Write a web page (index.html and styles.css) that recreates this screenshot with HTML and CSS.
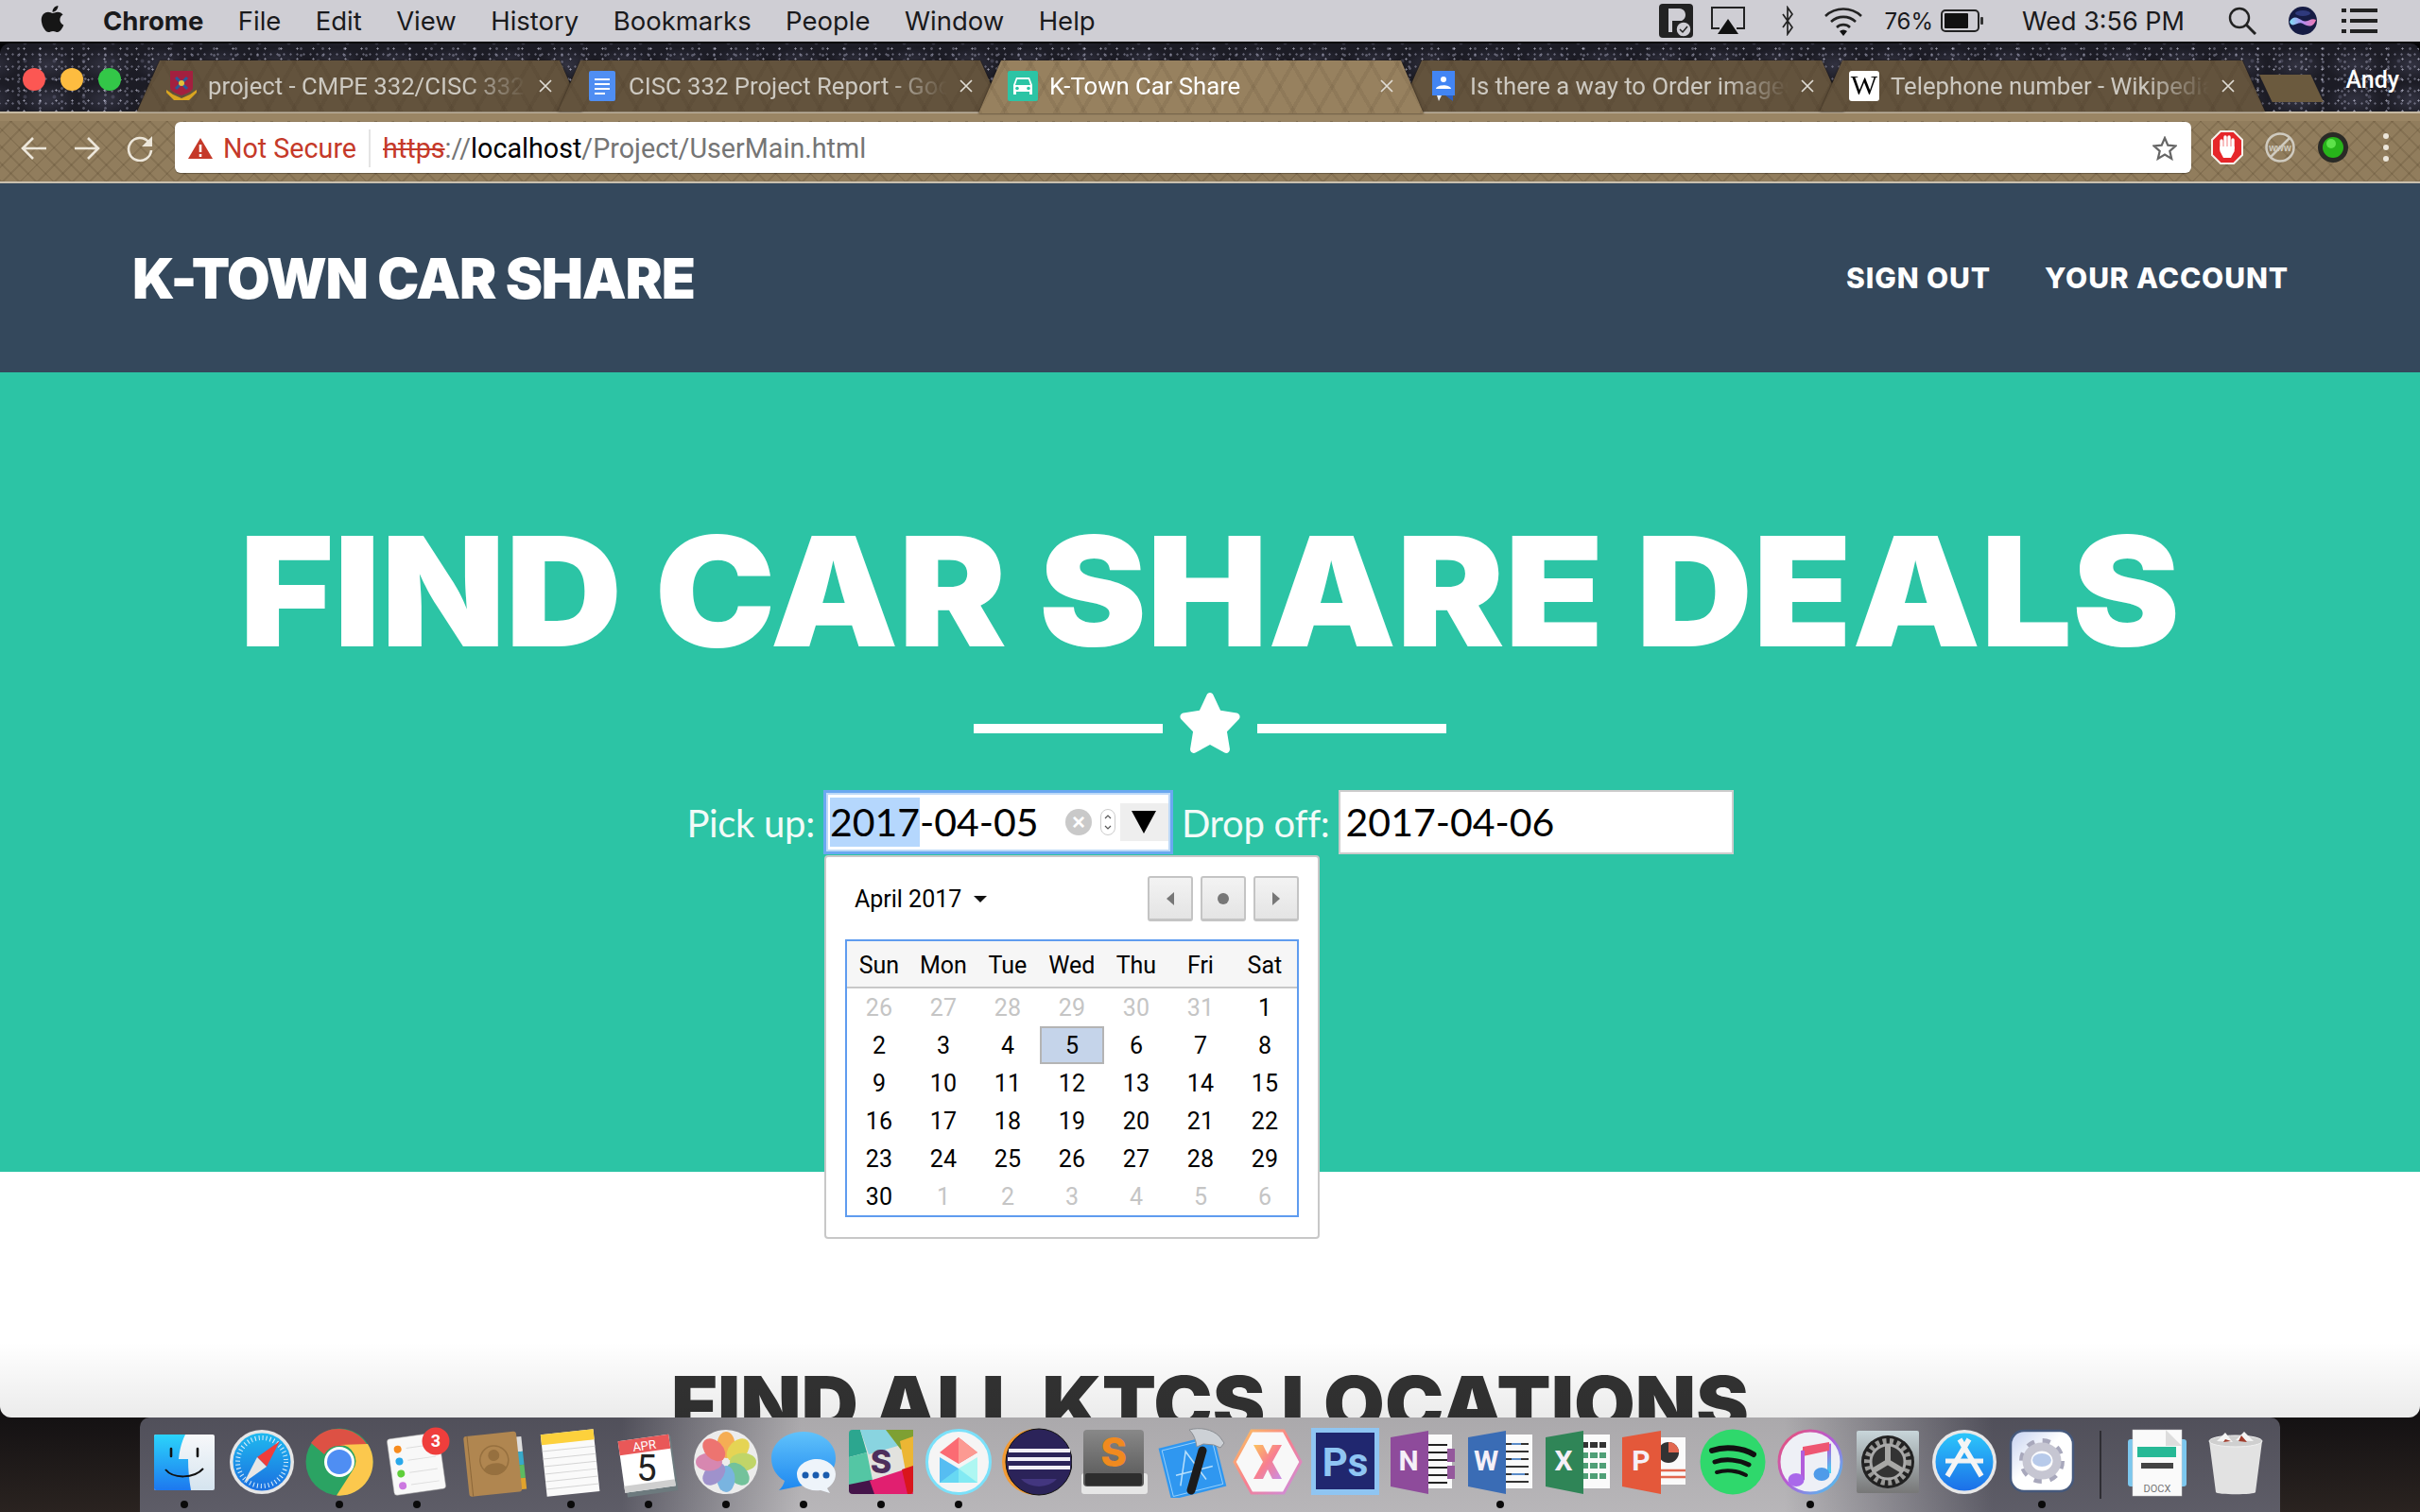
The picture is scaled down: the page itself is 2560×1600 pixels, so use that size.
FILE: index.html
```html
<!DOCTYPE html>
<html lang="en">
<head>
<meta charset="utf-8">
<title>K-Town Car Share</title>
<link rel="stylesheet" href="styles.css">
</head>
<body>
<svg class="defs" width="0" height="0"><defs>
<symbol id="close" viewBox="0 0 16 16"><path d="M2 2L14 14M14 2L2 14" fill="none" stroke="currentColor" stroke-width="1.7"/></symbol>
</defs></svg>
<header class="menubar">
  <svg class="apple" viewBox="0 0 384 512"><path d="M318.7 268.7c-.2-36.7 16.4-64.4 50-84.8-18.8-26.9-47.2-41.7-84.7-44.6-35.5-2.8-74.3 20.7-88.5 20.7-15 0-49.4-19.7-76.4-19.7C63.3 141.2 4 184.8 4 273.5q0 39.3 14.4 81.2c12.8 36.7 59 126.7 107.2 125.2 25.2-.6 43-17.9 75.8-17.9 31.8 0 48.3 17.9 76.4 17.9 48.6-.7 90.4-82.5 102.6-119.3-65.2-30.7-61.7-90-61.7-91.9zm-56.6-164.2c27.3-32.4 24.8-61.9 24-72.5-24.1 1.4-52 16.4-67.9 34.9-17.5 19.8-27.8 44.3-25.6 71.9 26.1 2 49.9-11.4 69.5-34.3z"/></svg>
  <nav class="menus"><b>Chrome</b><span>File</span><span>Edit</span><span>View</span><span>History</span><span>Bookmarks</span><span>People</span><span>Window</span><span>Help</span></nav>
  <div class="status">
    <svg class="st-b" viewBox="0 0 36 36"><rect width="36" height="36" rx="4" fill="#222"/><path d="M10 5h10c6 0 8 3 8 7 0 3-2 5-4 6H14v12h-4z" fill="#cfced4"/><circle cx="26" cy="27" r="8" fill="#cfced4" stroke="#222" stroke-width="1.5"/><path d="M22 27l3 3 5-6" fill="none" stroke="#222" stroke-width="1.5"/></svg>
    <svg class="st-air" viewBox="0 0 36 30"><path d="M9 23H1V1h34v22h-8" fill="none" stroke="#222" stroke-width="2"/><path d="M18 13l11 16H7z" fill="#111"/></svg>
    <svg class="st-bt" viewBox="0 0 12 32"><path d="M1 9l10 14-5 7V2l5 7L1 23" fill="none" stroke="#222" stroke-width="1.7"/></svg>
    <svg class="st-wifi" viewBox="0 0 42 32"><path d="M2 11a28 28 0 0 1 38 0M8 17a19 19 0 0 1 26 0M14 23a10 10 0 0 1 14 0" fill="none" stroke="#222" stroke-width="2.6"/><path d="M21 32l-4-5a6 6 0 0 1 8 0z" fill="#111"/></svg>
    <span class="st-pct">76%</span>
    <svg class="st-bat" viewBox="0 0 46 24"><rect x="1" y="1" width="39" height="22" rx="4" fill="none" stroke="#222" stroke-width="2"/><rect x="4" y="4" width="25" height="16" rx="1" fill="#111"/><rect x="42" y="8" width="3" height="8" rx="1" fill="#333"/></svg>
    <span class="st-time">Wed 3:56 PM</span>
    <svg class="st-search" viewBox="0 0 30 30"><circle cx="12" cy="12" r="10" fill="none" stroke="#222" stroke-width="2.4"/><path d="M19 19l10 10" stroke="#222" stroke-width="3"/></svg>
    <svg class="st-siri" viewBox="0 0 30 30"><defs><linearGradient id="siri" x1="0" y1="0" x2="1" y2="0"><stop offset="0" stop-color="#7fe0f4"/><stop offset=".5" stop-color="#b38cf0"/><stop offset="1" stop-color="#f07ab0"/></linearGradient></defs><circle cx="15" cy="15" r="15" fill="#161c44"/><path d="M1 16c5-8 9-3 14-1s9-4 14-1c-3 9-9 7-14 4s-11 6-14-2z" fill="url(#siri)"/><ellipse cx="15" cy="7" rx="8" ry="3" fill="#2f3a7c"/></svg>
    <svg class="st-list" viewBox="0 0 38 28"><path d="M9 3h29M9 14h29M9 25h29" stroke="#222" stroke-width="4"/><path d="M0 3h5M0 14h5M0 25h5" stroke="#222" stroke-width="4"/></svg>
  </div>
</header>

<main class="window">
  <div class="tabstrip">
    <div class="lights"><i class="l-red"></i><i class="l-yel"></i><i class="l-grn"></i></div>
    <div class="tabs">
      <div class="tab">
        <svg class="fav" viewBox="0 0 32 32"><path d="M4 0h24v17c0 4-4 6-12 9C8 23 4 21 4 17z" fill="#a3203f"/><path d="M0 20l7 5 9 4 9-4 7-5v3l-8 8H8l-8-8z" fill="#d9a520"/><path d="M10 7l12 12M22 7L10 19" stroke="#2a5a9a" stroke-width="3"/><circle cx="16" cy="13" r="3" fill="#e3c23a"/></svg>
        <span class="tab-title">project - CMPE 332/CISC 332</span>
        <svg class="tab-x"><use href="#close"/></svg>
      </div>
      <div class="tab">
        <svg class="fav fav-doc" viewBox="0 0 32 32"><rect x="2" width="28" height="32" rx="2" fill="#4f8ef3"/><path d="M8 9h16M8 14h16M8 19h16M8 24h11" stroke="#fff" stroke-width="2.2"/></svg>
        <span class="tab-title">CISC 332 Project Report - Google</span>
        <svg class="tab-x"><use href="#close"/></svg>
      </div>
      <div class="tab tab-active">
        <svg class="fav" viewBox="0 0 32 32"><rect width="32" height="32" rx="2" fill="#2cc4a5"/><path d="M9 7h14l3 8v10h-3v-3H9v3H6V15z" fill="#fff"/><path d="M10 9h12l2 6H8z" fill="#2cc4a5"/><circle cx="10" cy="18.500" r="1.800" fill="#2cc4a5"/><circle cx="22" cy="18.500" r="1.800" fill="#2cc4a5"/></svg>
        <span class="tab-title">K-Town Car Share</span>
        <svg class="tab-x"><use href="#close"/></svg>
      </div>
      <div class="tab">
        <svg class="fav" viewBox="0 0 32 32"><path d="M4 0h24v26H14l-3 6-2-6H4z" fill="#e9eef6"/><path d="M4 0h24v26H16l-7 0H4z" fill="#4285f4"/><path d="M26 26l-8 0 8 6z" fill="#2a5fc4"/><circle cx="16" cy="9" r="3" fill="#fff"/><path d="M8 19c1-5 15-5 16 0z" fill="#fff"/></svg>
        <span class="tab-title">Is there a way to Order images</span>
        <svg class="tab-x"><use href="#close"/></svg>
      </div>
      <div class="tab">
        <svg class="fav" viewBox="0 0 32 32"><rect width="32" height="32" rx="3" fill="#fff"/><text x="16" y="25" class="fav-w">W</text></svg>
        <span class="tab-title">Telephone number - Wikipedia</span>
        <svg class="tab-x"><use href="#close"/></svg>
      </div>
      <div class="newtab"></div>
    </div>
    <span class="profile">Andy</span>
  </div>

  <div class="toolbar">
    <svg class="navbtn" viewBox="0 0 28 28"><path d="M27 14H3M13 3L2 14l11 11" fill="none" stroke="#ece6da" stroke-width="2.600"/></svg>
    <svg class="navbtn" viewBox="0 0 28 28"><path d="M1 14h24M15 3l11 11-11 11" fill="none" stroke="#ece6da" stroke-width="2.600"/></svg>
    <svg class="navbtn" viewBox="0 0 28 28"><path d="M23 7a12 12 0 1 0 3 9" fill="none" stroke="#ece6da" stroke-width="2.600"/><path d="M27 1v11H16z" fill="#ece6da"/></svg>
    <div class="omnibox">
      <svg class="warn" viewBox="0 0 26 22"><path d="M13 0l13 22H0z" fill="#c53929"/><path d="M13 7v8M13 17v3" stroke="#fff" stroke-width="2.600"/></svg>
      <span class="notsecure">Not Secure</span>
      <i class="omni-sep"></i>
      <span class="url"><s>https</s><span class="url-g">://</span><span class="url-h">localhost</span><span class="url-g">/Project/UserMain.html</span></span>
      <svg class="bookmark" viewBox="0 0 26 26"><path d="M13 2l3.300 7.600 8.200.8-6.200 5.400 1.900 8.100-7.200-4.300-7.200 4.300 1.900-8.100-6.200-5.400 8.200-.8z" fill="none" stroke="#666" stroke-width="2.200"/></svg>
    </div>
    <div class="exts">
      <svg viewBox="0 0 34 36"><path d="M10 1h14l9 9v16l-9 9H10l-9-9V10z" fill="#e6262a" stroke="#f5f0ea" stroke-width="2"/><path d="M11 20V11M15 18V7M19 18V7M23 19V10" stroke="#fff" stroke-width="3.400" stroke-linecap="round"/><path d="M9.400 17h15.300v5l-3.700 7h-8l-3.600-7z" fill="#fff"/></svg>
      <svg viewBox="0 0 34 36"><circle cx="17" cy="18" r="14.500" fill="none" stroke="#cfcabf" stroke-width="2.500"/><path d="M7 28L27 8" stroke="#cfcabf" stroke-width="2.500"/><text x="17" y="22" class="ext-www">www</text></svg>
      <svg viewBox="0 0 34 36"><circle cx="17" cy="18" r="16" fill="#2a2a26"/><circle cx="17" cy="18" r="11" fill="#27b41a"/><circle cx="15" cy="14" r="5" fill="#5de24a"/></svg>
      <svg viewBox="0 0 34 36"><circle cx="17" cy="6" r="3" fill="#ece6da"/><circle cx="17" cy="18" r="3" fill="#ece6da"/><circle cx="17" cy="30" r="3" fill="#ece6da"/></svg>
    </div>
  </div>

  <div class="page">
    <div class="site-head">
      <a class="brand">K-TOWN CAR SHARE</a>
      <nav class="site-nav"><a>SIGN OUT</a><a>YOUR ACCOUNT</a></nav>
    </div>
    <section class="hero">
      <h1>FIND CAR SHARE DEALS</h1>
      <div class="divider"><i></i><svg viewBox="0 0 576 512" preserveAspectRatio="none"><path d="M259.3 17.8L194 150.200 47.900 171.500c-26.200 3.800-36.700 36.100-17.700 54.600l105.700 103-25 145.500c-4.500 26.300 23.200 46 46.400 33.700L288 439.600l130.700 68.700c23.200 12.200 50.900-7.400 46.400-33.700l-25-145.500 105.700-103c19-18.500 8.500-50.800-17.700-54.600L382 150.200 316.700 17.800c-11.700-23.600-45.600-24.200-57.400 0z" fill="#fff"/></svg><i></i></div>
      <form class="dates">
        <label>Pick up:</label>
        <div class="field field-focus">
          <span class="val"><span class="sel">2017</span>-04-05</span>
          <span class="clear">×</span>
          <svg class="spin" viewBox="0 0 16 28"><rect x=".5" y=".5" width="15" height="27" rx="7.500" fill="#fff" stroke="#ccc"/><path d="M5 10l3-3 3 3M5 18l3 3 3-3" fill="none" stroke="#555" stroke-width="1.200"/></svg>
          <span class="drop"><i></i></span>
          <div class="picker">
            <div class="picker-top">
              <span class="month">April 2017</span><i class="caret"></i>
              <div class="pbtns">
                <span class="pbtn"><i class="tri-l"></i></span>
                <span class="pbtn"><i class="pdot"></i></span>
                <span class="pbtn"><i class="tri-r"></i></span>
              </div>
            </div>
            <div class="cal">
              <div class="cal-head"><span>Sun</span><span>Mon</span><span>Tue</span><span>Wed</span><span>Thu</span><span>Fri</span><span>Sat</span></div>
              <div class="cal-body">
                <span class="off">26</span><span class="off">27</span><span class="off">28</span><span class="off">29</span><span class="off">30</span><span class="off">31</span><span>1</span>
                <span>2</span><span>3</span><span>4</span><span class="today">5</span><span>6</span><span>7</span><span>8</span>
                <span>9</span><span>10</span><span>11</span><span>12</span><span>13</span><span>14</span><span>15</span>
                <span>16</span><span>17</span><span>18</span><span>19</span><span>20</span><span>21</span><span>22</span>
                <span>23</span><span>24</span><span>25</span><span>26</span><span>27</span><span>28</span><span>29</span>
                <span>30</span><span class="off">1</span><span class="off">2</span><span class="off">3</span><span class="off">4</span><span class="off">5</span><span class="off">6</span>
              </div>
            </div>
          </div>
        </div>
        <label>Drop off:</label>
        <div class="field field-plain"><span class="val">2017-04-06</span></div>
      </form>
    </section>
    <section class="locations"><h2>FIND ALL KTCS LOCATIONS</h2></section>
    <div class="dock-shade"></div>
  </div>
</main>

<footer class="dock">
  <div class="dk dot"><svg viewBox="0 0 76 76"><defs><linearGradient id="f1" x1="0" y1="0" x2="0" y2="1"><stop offset="0" stop-color="#2bd4fb"/><stop offset="1" stop-color="#1d78ef"/></linearGradient><linearGradient id="f2" x1="0" y1="0" x2="0" y2="1"><stop offset="0" stop-color="#f7f8fa"/><stop offset="1" stop-color="#d5e4ef"/></linearGradient></defs><rect x="6" y="9" width="64" height="59" rx="2" fill="url(#f2)"/><path d="M8 9h31c-4 8-6 16-7 26h10c0 11 1 22 3 33H8a2 2 0 0 1-2-2V11a2 2 0 0 1 2-2z" fill="url(#f1)"/><path d="M24 24v8M52 24v8" stroke="#111" stroke-width="2.600" stroke-linecap="round"/><path d="M18 46c8 10 30 10 40-1" fill="none" stroke="#111" stroke-width="2"/></svg></div>
  <div class="dk"><svg viewBox="0 0 76 76"><defs><linearGradient id="s1" x1="0" y1="0" x2="0" y2="1"><stop offset="0" stop-color="#1fb9ef"/><stop offset="1" stop-color="#1b6fe0"/></linearGradient></defs><circle cx="38" cy="38" r="34" fill="#e6e6e6"/><circle cx="38" cy="38" r="30.500" fill="url(#s1)"/><circle cx="38" cy="38" r="25.500" fill="none" stroke="#dff1fb" stroke-width="5" stroke-dasharray="1 3"/><path d="M57 16L43 43 33 33z" fill="#ee3d3b"/><path d="M19 60l14-27 10 10z" fill="#e6e6e6"/></svg></div>
  <div class="dk dot"><svg viewBox="0 0 76 76"><circle cx="38" cy="38" r="35.500" fill="#2ba363"/><path d="M8 18a35.500 35.500 0 0 1 60 3H38a18 18 0 0 0-16 9z" fill="#dd5144"/><path d="M68 19a35.500 35.500 0 0 1-33 54.500L52 47a17 17 0 0 0-14-27z" fill="#fcc84d"/><circle cx="38" cy="38" r="16" fill="#fff"/><circle cx="38" cy="38" r="13" fill="#4f8ef3"/></svg></div>
  <div class="dk dot"><svg viewBox="0 0 76 76"><g transform="rotate(-8 38 40)"><rect x="10" y="10" width="55" height="60" rx="3" fill="#f8f8f8" stroke="#aaa" stroke-width=".5"/><circle cx="20" cy="22" r="4" fill="#f78b1e"/><circle cx="20" cy="35" r="4" fill="#29a8ea"/><circle cx="20" cy="48" r="4" fill="#5fcf3a"/><circle cx="20" cy="61" r="4" fill="#cc78e0"/><path d="M29 22h30M29 35h30M29 48h30M29 61h30" stroke="#ddd"/></g><circle cx="58" cy="16" r="14.500" fill="#ef3e3c"/><text x="58" y="22" class="dk-badge">3</text></svg></div>
  <div class="dk"><svg viewBox="0 0 76 76"><g transform="rotate(-6 38 38)"><rect x="60" y="14" width="9" height="16" fill="#ddd"/><rect x="60" y="30" width="9" height="14" fill="#38a9c9"/><rect x="60" y="44" width="9" height="14" fill="#5cbb62"/><rect x="60" y="58" width="9" height="12" fill="#e2a32c"/><rect x="8" y="8" width="56" height="64" rx="3" fill="#b08650"/><path d="M12 8v64" stroke="#8b6739"/><circle cx="38" cy="36" r="15" fill="none" stroke="#96703f" stroke-width="1.500"/><circle cx="38" cy="31" r="6" fill="#96703f"/><path d="M26 46c2-9 22-9 24 0a15 15 0 0 1-24 0z" fill="#96703f"/></g></svg></div>
  <div class="dk dot"><svg viewBox="0 0 76 76"><g transform="rotate(-6 38 38)"><rect x="9" y="6" width="56" height="66" fill="#fafafa"/><path d="M9 16h56M9 24h56M9 32h56M9 40h56M9 48h56M9 56h56M9 64h56" stroke="#d4d4d4"/><rect x="9" y="6" width="56" height="11" fill="#fdd13c"/></g></svg></div>
  <div class="dk dot"><svg viewBox="0 0 76 76"><g transform="rotate(-8 38 38)"><rect x="11" y="14" width="54" height="58" fill="#6d7a7e"/><rect x="9" y="12" width="54" height="55" fill="#fff"/><rect x="9" y="12" width="54" height="15" fill="#e95858"/><rect x="9" y="60" width="54" height="7" fill="#cfcfcf"/><text x="36" y="25" class="dk-apr">APR</text></g><text x="36" y="58" class="dk-five">5</text></svg></div>
  <div class="dk dot"><svg viewBox="0 0 76 76"><circle cx="38" cy="38" r="34" fill="#ececec"/><g opacity=".82"><ellipse cx="38" cy="20" rx="9.500" ry="14" fill="#f7a033"/><ellipse cx="38" cy="20" rx="9.500" ry="14" fill="#e4cf33" transform="rotate(45 38 38)"/><ellipse cx="38" cy="20" rx="9.500" ry="14" fill="#b7d14c" transform="rotate(90 38 38)"/><ellipse cx="38" cy="20" rx="9.500" ry="14" fill="#59b98a" transform="rotate(135 38 38)"/><ellipse cx="38" cy="20" rx="9.500" ry="14" fill="#61a8de" transform="rotate(180 38 38)"/><ellipse cx="38" cy="20" rx="9.500" ry="14" fill="#8f7fc6" transform="rotate(225 38 38)"/><ellipse cx="38" cy="20" rx="9.500" ry="14" fill="#d372a4" transform="rotate(270 38 38)"/><ellipse cx="38" cy="20" rx="9.500" ry="14" fill="#ee5a55" transform="rotate(315 38 38)"/></g></svg></div>
  <div class="dk dot"><svg viewBox="0 0 76 76"><defs><linearGradient id="m1" x1="0" y1="0" x2="0" y2="1"><stop offset="0" stop-color="#60c2fb"/><stop offset="1" stop-color="#1e88f0"/></linearGradient></defs><path d="M38 6c19 0 34 12 34 28S57 61 42 62L12 68c3-3 5-6 6-10C9 53 4 44 4 34 4 18 19 6 38 6z" fill="url(#m1)"/><path d="M52 35c11 0 20 7 20 16 0 8-6 13-9 15l3 5-10-3c-15 2-25-7-25-17 0-9 10-16 21-16z" fill="#eef4fa"/><circle cx="40" cy="52" r="3.500" fill="#1a5cae"/><circle cx="51" cy="52" r="3.500" fill="#1a5cae"/><circle cx="62" cy="52" r="3.500" fill="#1a5cae"/></svg></div>
  <div class="dk dot"><svg viewBox="0 0 76 76"><rect x="4" y="4" width="68" height="68" rx="6" fill="#e2e2de"/><path d="M4 8a4 4 0 0 1 4-4h8l7 24-19 5z" fill="#2ca68f"/><path d="M16 4h44l6 14-41 12z" fill="#89d4e0"/><path d="M43 4h29v12l-13 9z" fill="#7ea033"/><path d="M58 16l14-5v34l-8 3z" fill="#ecb634"/><path d="M4 33l19-5 7 34-26 8z" fill="#54c6a4"/><path d="M4 62l24-5 5 15H8a4 4 0 0 1-4-4z" fill="#45144a"/><path d="M26 58l40-13 6 27H31z" fill="#e11f70"/><path d="M60 46l12-4v26a4 4 0 0 1-4 4h-2z" fill="#d9161c"/><text x="38" y="50" class="dk-s">S</text></svg></div>
  <div class="dk dot"><svg viewBox="0 0 76 76"><circle cx="38" cy="38" r="33.500" fill="#f5f5f5" stroke="#7be1fa" stroke-width="3"/><path d="M38 12l20 16-20 12-20-12z" fill="#fb6b73"/><path d="M38 12l20 16-20 12z" fill="#fc9a92"/><path d="M18 33l20 12v15H18z" fill="#56bdf2"/><path d="M58 33L38 45v15h20z" fill="#aef7f2"/><path d="M18 60l20-15 20 15z" fill="#6fe4f4" opacity=".7"/></svg></div>
  <div class="dk"><svg viewBox="0 0 76 76"><circle cx="37" cy="38" r="35" fill="#f29a33"/><circle cx="41" cy="38" r="35" fill="#2b2359" stroke="#111" stroke-width="1"/><path d="M22 56a22 16 0 0 0 38 0z" fill="#43367f"/><path d="M9 26h65M8 35h66M9 44h65" stroke="#f1eff7" stroke-width="4"/></svg></div>
  <div class="dk"><svg viewBox="0 0 76 76"><defs><linearGradient id="sb" x1="0" y1="0" x2="0" y2="1"><stop offset="0" stop-color="#888"/><stop offset="1" stop-color="#555"/></linearGradient></defs><rect x="4" y="50" width="70" height="22" rx="3" fill="#e6e6e6"/><rect x="6" y="4" width="64" height="60" rx="4" fill="url(#sb)"/><rect x="8" y="50" width="60" height="13" rx="2" fill="#2d2d2d"/><text x="38" y="43" class="dk-sub">S</text></svg></div>
  <div class="dk"><svg viewBox="0 0 76 76"><g transform="rotate(-14 38 42)"><rect x="9" y="16" width="60" height="56" fill="#2f97f0"/><rect x="12" y="19" width="54" height="50" fill="none" stroke="#a8d8fc" stroke-width=".8"/><path d="M22 60L36 26l14 34M20 48h40" fill="none" stroke="#b9e0fb" stroke-width="1.500"/></g><path d="M50 26L38 68" stroke="#1c1c1c" stroke-width="9" stroke-linecap="round"/><path d="M36 4c11-3 24-1 32 7l5 7-4 5-7-3-11-1-7 3c-1-7-3-13-8-18z" fill="#cdd1d6" stroke="#8a8d92"/></svg></div>
  <div class="dk"><svg viewBox="0 0 76 76"><defs><linearGradient id="x1" x1="0" y1="0" x2="1" y2="1"><stop offset="0" stop-color="#fcc35c"/><stop offset=".5" stop-color="#f87f8f"/><stop offset="1" stop-color="#c88ee6"/></linearGradient></defs><path d="M21 5h34l18 33-18 33H21L3 38z" fill="#f8f8f8" stroke="url(#x1)" stroke-width="3"/><path d="M23 20h10l5 10 5-10h10L43 38l10 18H43l-5-10-5 10H23l10-18z" fill="url(#x1)"/></svg></div>
  <div class="dk"><svg viewBox="0 0 76 76"><rect x="2" y="2" width="72" height="71" fill="#8fc5f2"/><rect x="7" y="7" width="62" height="60" fill="#20276f"/><text x="38" y="53" class="dk-ps">Ps</text></svg></div>
  <div class="dk"><svg viewBox="0 0 76 76"><rect x="36" y="9" width="33" height="57" fill="#fafafa"/><path d="M40 20h24M40 28h24M40 36h24M40 44h24M40 52h24M40 60h24" stroke="#222" stroke-width="2.200"/><rect x="64" y="24" width="8" height="14" fill="#94589c"/><rect x="64" y="42" width="8" height="14" fill="#94589c"/><path d="M4 12l40-7v67L4 64z" fill="#8e4b9b"/><text x="23" y="47" class="dk-off">N</text></svg></div>
  <div class="dk dot"><svg viewBox="0 0 76 76"><rect x="36" y="9" width="36" height="57" fill="#fafafa"/><path d="M40 19h28M40 27h28M40 35h28M40 43h28M40 51h28M40 59h28" stroke="#333" stroke-width="2.200"/><path d="M50 19h10M50 35h10M50 51h14" stroke="#5b8cc9" stroke-width="2.200"/><path d="M4 12l40-7v67L4 64z" fill="#3a6cb5"/><text x="23" y="47" class="dk-off">W</text></svg></div>
  <div class="dk"><svg viewBox="0 0 76 76"><rect x="36" y="9" width="36" height="57" fill="#fafafa"/><path d="M42 20h26M42 31h26M42 42h26M42 53h26" stroke="#4f9f76" stroke-width="6"/><path d="M42 20h26" stroke="#333" stroke-width="6"/><path d="M50 12v50M60 12v50" stroke="#fafafa" stroke-width="2"/><path d="M4 12l40-7v67L4 64z" fill="#2f8557"/><text x="23" y="47" class="dk-off">X</text></svg></div>
  <div class="dk"><svg viewBox="0 0 76 76"><rect x="38" y="12" width="32" height="50" fill="#fafafa"/><circle cx="52" cy="28" r="11" fill="#333"/><path d="M52 17a11 11 0 0 1 11 11H52z" fill="#e2674f"/><path d="M44 47h26M44 54h26" stroke="#e2674f" stroke-width="2.500"/><path d="M3 12l41-7v67L3 64z" fill="#e4583a"/><text x="23" y="47" class="dk-off">P</text></svg></div>
  <div class="dk"><svg viewBox="0 0 76 76"><circle cx="38" cy="38" r="34.500" fill="#2fd86c"/><path d="M16 26c14-5 32-3 44 4" fill="none" stroke="#111" stroke-width="6" stroke-linecap="round"/><path d="M19 38c12-4 26-2 36 3" fill="none" stroke="#111" stroke-width="5" stroke-linecap="round"/><path d="M21 49c10-3 22-2 31 3" fill="none" stroke="#111" stroke-width="4" stroke-linecap="round"/></svg></div>
  <div class="dk dot"><svg viewBox="0 0 76 76"><defs><linearGradient id="it" x1="0" y1="0" x2="1" y2="1"><stop offset="0" stop-color="#f0506a"/><stop offset=".5" stop-color="#b25ddb"/><stop offset="1" stop-color="#3fd3f3"/></linearGradient></defs><circle cx="38" cy="38" r="33" fill="#eef0f6" stroke="url(#it)" stroke-width="3"/><path d="M30 27l28-6v29" fill="none" stroke="url(#it)" stroke-width="4"/><path d="M30 22l28-5v9l-28 6z" fill="#ee5672"/><path d="M30 26v31" stroke="#b25ddb" stroke-width="4"/><ellipse cx="23" cy="57" rx="8.500" ry="7" fill="#a968ea"/><ellipse cx="50" cy="51" rx="8.500" ry="7" fill="#4f9be9"/></svg></div>
  <div class="dk"><svg viewBox="0 0 76 76"><defs><linearGradient id="sp" x1="0" y1="0" x2="0" y2="1"><stop offset="0" stop-color="#c8d6da"/><stop offset="1" stop-color="#777"/></linearGradient></defs><rect x="5" y="5" width="66" height="66" rx="2" fill="url(#sp)"/><circle cx="38" cy="38" r="28" fill="#222"/><circle cx="38" cy="38" r="22" fill="none" stroke="#9a9a98" stroke-width="6" stroke-dasharray="4 3.500"/><circle cx="38" cy="38" r="18" fill="#333" stroke="#aaa" stroke-width="3"/><path d="M38 38V21M38 38L23 47M38 38l15 9" stroke="#a8a8a6" stroke-width="6"/></svg></div>
  <div class="dk"><svg viewBox="0 0 76 76"><defs><linearGradient id="ap" x1="0" y1="0" x2="0" y2="1"><stop offset="0" stop-color="#2cc7fb"/><stop offset="1" stop-color="#1c6fe8"/></linearGradient></defs><circle cx="38" cy="38" r="34" fill="#e8e8e8"/><circle cx="38" cy="38" r="30.500" fill="url(#ap)"/><path d="M18 37h40" stroke="#f2f2f2" stroke-width="5"/><path d="M43 14L20 53M33 14l23 39" stroke="#f5f5f5" stroke-width="5.500"/></svg></div>
  <div class="dk dot"><svg viewBox="0 0 76 76"><defs><linearGradient id="gr" x1="0" y1="0" x2="1" y2="1"><stop offset="0" stop-color="#c4d0f0"/><stop offset=".45" stop-color="#fff"/></linearGradient></defs><rect x="5" y="5" width="66" height="64" rx="14" fill="url(#gr)" stroke="#46597c" stroke-width="2.500"/><circle cx="38" cy="37" r="21" fill="none" stroke="#a8a8bc" stroke-width="6" stroke-dasharray="8 8.500"/><ellipse cx="38" cy="37" rx="16" ry="15" fill="none" stroke="#c6c6d2" stroke-width="9"/><ellipse cx="38" cy="36" rx="10" ry="7" fill="#b7caea"/></svg></div>
  <div class="dk-sep"></div>
  <div class="dk"><svg viewBox="0 0 76 76"><rect x="6" y="14" width="62" height="50" rx="3" fill="#7cc7ee"/><rect x="11" y="4" width="52" height="70" fill="#fafafa" stroke="#ccc" stroke-width=".5"/><path d="M46 4l17 17H46z" fill="#ddd"/><rect x="16" y="22" width="41" height="11" fill="#27b996"/><rect x="20" y="39" width="34" height="6" fill="#444"/><text x="37" y="70" class="dk-docx">DOCX</text></svg></div>
  <div class="dk"><svg viewBox="0 0 76 76"><path d="M10 16h56l-7 54c0 3-42 3-42 0z" fill="#e2e2e2"/><ellipse cx="38" cy="16" rx="28" ry="6" fill="#cfcfcf" stroke="#f0f0f0"/><path d="M18 16l9-9 8 10zM38 15l9-9 10 10z" fill="#f4f4f4"/><path d="M27 14l6 2-8 1zM44 10l6 7-9-1z" fill="#a03c2c"/></svg></div>
</footer>
</body>
</html>
```
FILE: styles.css
```css
* { box-sizing: border-box; }
html, body { margin: 0; height: 100%; }
body {
  position: relative;
  width: 2560px;
  height: 1600px;
  overflow: hidden;
  background: linear-gradient(180deg, #050508 0, #07070b 90%, #2a2320 100%);
  display: flex;
  flex-direction: column;
  font-family: "Inter", "Liberation Sans", sans-serif;
}
.defs { position: absolute; }

/* macOS menu bar */
.menubar {
  height: 46px;
  flex: none;
  background: #cfced4;
  border-bottom: 2px solid #0a0a0a;
  display: flex;
  align-items: center;
  padding: 0 45px 0 42px;
  color: #1a1a1c;
  font-size: 27.5px;
}
.apple { width: 27px; height: 32px; fill: #161616; flex: none; margin-top: -5px; }
.menus { display: flex; gap: 36.4px; margin-left: 40px; white-space: nowrap; }
.menus b { font-weight: 700; }
.status { margin-left: auto; display: flex; align-items: center; white-space: nowrap; }
.status svg { flex: none; }
.st-b { width: 36px; height: 36px; }
.st-air { width: 36px; height: 30px; margin-left: 19px; }
.st-bt { width: 12px; height: 32px; margin-left: 39px; }
.st-wifi { width: 42px; height: 32px; margin-left: 32px; }
.st-pct { margin-left: 22px; font-size: 24px; }
.st-bat { width: 46px; height: 24px; margin-left: 8px; }
.st-time { margin-left: 40px; font-size: 27px; }
.st-search { width: 30px; height: 30px; margin-left: 46px; }
.st-siri { width: 30px; height: 30px; margin-left: 34px; }
.st-list { width: 38px; height: 28px; margin-left: 26px; }

/* Browser window */
.window {
  flex: none;
  height: 1454px;
  display: flex;
  flex-direction: column;
  border-radius: 10px 10px 12px 12px;
  overflow: hidden;
}
.tabstrip {
  flex: none;
  height: 72px;
  display: flex;
  align-items: flex-end;
  position: relative;
  z-index: 1;
  background-color: #1c1c25;
  background-image:
    radial-gradient(circle, rgba(225,225,245,.6) 0 .8px, transparent 1.4px),
    radial-gradient(circle, rgba(205,205,230,.4) 0 .8px, transparent 1.5px),
    radial-gradient(circle, rgba(190,190,215,.35) 0 1px, transparent 1.7px),
    radial-gradient(circle, rgba(150,150,180,.25) 0 1.4px, transparent 2.4px),
    radial-gradient(ellipse, rgba(90,90,115,.35) 0, transparent 70%);
  background-size: 17px 11px, 7px 13px, 23px 7px, 31px 19px, 61px 37px;
  background-position: 0 0, 3px 5px, 8px 2px, 11px 9px, 20px 4px;
}
.lights {
  position: absolute;
  left: 24px;
  top: 26px;
  display: flex;
  gap: 16px;
}
.lights i { width: 24px; height: 24px; border-radius: 50%; }
.l-red { background: #fc5753; }
.l-yel { background: #fdbc40; }
.l-grn { background: #33c748; }
.tabs { display: flex; align-items: flex-end; padding-left: 145px; }
.tab {
  width: 471px;
  height: 54px;
  margin-right: -26px;
  flex: none;
  position: relative;
  filter: drop-shadow(0 0 1px rgba(25,18,10,.8));
  display: flex;
  align-items: center;
  padding: 0 31px 0 31px;
  gap: 12px;
  color: #cdc9c1;
  font-size: 25.7px;
  font-family: "Roboto", "Liberation Sans", sans-serif;
}
.tab::before {
  content: "";
  position: absolute;
  inset: 0;
  z-index: -1;
  clip-path: polygon(24px 0, calc(100% - 24px) 0, 100% 100%, 0 100%);
  background-color: #63533d;
  background-image:
    repeating-linear-gradient(60deg, rgba(45,30,15,.08) 0 4px, transparent 4px 24px),
    repeating-linear-gradient(-60deg, rgba(45,30,15,.08) 0 4px, transparent 4px 24px);
}
.tab-active { color: #fff; height: 56px; margin-bottom: -2px; padding-bottom: 2px; z-index: 2; }
.tab-active::before { background-color: #97815f; }
.fav { width: 32px; height: 32px; flex: none; }
.fav-w { font-family: "Liberation Serif", serif; font-size: 30px; text-anchor: middle; fill: #000; }
.tab-title {
  flex: 1;
  min-width: 0;
  overflow: hidden;
  white-space: nowrap;
  -webkit-mask-image: linear-gradient(90deg, #000 80%, transparent 100%);
  mask-image: linear-gradient(90deg, #000 80%, transparent 100%);
}
.tab-active .tab-title { -webkit-mask-image: none; mask-image: none; }
.tab-x { width: 16px; height: 16px; flex: none; color: #e0dcd4; }
.newtab {
  width: 68px;
  height: 29px;
  margin: 0 0 10px 20px;
  flex: none;
  background: #6b5a3e;
  clip-path: polygon(0 0, 80% 0, 100% 100%, 20% 100%);
}
.profile {
  position: absolute;
  right: 22px;
  top: 24px;
  color: #fff;
  font: 500 25px "Roboto", sans-serif;
}

.toolbar {
  flex: none;
  height: 76px;
  display: flex;
  align-items: center;
  border-top: 2px solid #c6b9a2;
  border-bottom: 2px solid #c9bfae;
  padding-left: 22px;
  gap: 28px;
  background-color: #917d5d;
  background-image:
    linear-gradient(180deg, #9a8564 0 8px, rgba(0,0,0,0) 8px),
    repeating-linear-gradient(45deg, rgba(50,35,15,.13) 0 2px, transparent 2px 13px),
    repeating-linear-gradient(-45deg, rgba(50,35,15,.13) 0 2px, transparent 2px 13px);
}
.navbtn { width: 28px; height: 28px; flex: none; margin-top: 2px; }
.omnibox {
  width: 2133px;
  height: 54px;
  flex: none;
  margin-left: -5px;
  background: #fff;
  border-radius: 6px;
  box-shadow: 0 1px 1px rgba(0,0,0,.3);
  display: flex;
  align-items: center;
  padding: 1px 15px 0 14px;
  font: 28.7px "Roboto", "Liberation Sans", sans-serif;
  white-space: nowrap;
}
.warn { width: 26px; height: 22px; flex: none; }
.notsecure { color: #c53929; margin-left: 11px; }
.omni-sep { width: 2px; height: 40px; background: #e4e4e4; margin: 0 13px; }
.url { color: #757575; }
.url s { color: #c53929; }
.url-h { color: #000; }
.bookmark { width: 26px; height: 26px; margin-left: auto; flex: none; }
.exts { display: flex; gap: 22px; margin-left: -7px; }
.exts svg { width: 34px; height: 36px; flex: none; }
.ext-www { font: 700 10px "Liberation Sans", sans-serif; text-anchor: middle; fill: #cfcabf; }

/* Site */
.page {
  flex: 1;
  min-height: 0;
  position: relative;
  overflow: hidden;
  background: #fff;
}
.site-head {
  height: 200px;
  background: #34485c;
  display: flex;
  align-items: center;
  justify-content: space-between;
  padding: 0 139px 0 140px;
  color: #fff;
  font-weight: 800;
}
.brand { font-size: 59px; font-weight: 900; letter-spacing: -1.2px; white-space: nowrap; }
.site-nav { display: flex; gap: 57px; font-size: 30px; letter-spacing: .9px; white-space: nowrap; }
.hero {
  height: 846px;
  background: #2cc4a5;
  padding-top: 151px;
  display: flex;
  flex-direction: column;
  align-items: center;
  color: #fff;
}
.hero h1 {
  margin: 0 0 27px;
  font-size: 161px;
  line-height: 1;
  font-weight: 900;
  white-space: nowrap;
  transform: scaleX(1.063);
}
.divider { display: flex; align-items: flex-start; gap: 16px; }
.divider i { width: 200px; height: 10px; margin-top: 33px; background: #fff; }
.divider svg { width: 68px; height: 64px; display: block; }
.dates {
  margin-top: 39px;
  display: flex;
  align-items: center;
  gap: 9px;
  font: 40px "Lato", sans-serif;
}
.dates label { color: #f2fbf8; padding-top: 2px; letter-spacing: -.3px; }
.field {
  position: relative;
  height: 68px;
  background: #fff;
  color: #000;
  display: flex;
  align-items: center;
  font-size: 41px;
}
.field-focus {
  width: 370px;
  border: 3px solid #6aa8f0;
  box-shadow: inset 0 0 0 2px #bcd9f8;
  padding-left: 4px;
}
.field-plain { width: 418px; padding-left: 6px; border: 2px solid #ccc; }
.val { line-height: 52px; white-space: nowrap; }
.sel { background: #b5d7fd; display: inline-block; }
.clear {
  width: 28px;
  height: 28px;
  border-radius: 50%;
  background: #c9c9c9;
  color: #fff;
  font: 700 24px/28px "Liberation Sans", sans-serif;
  text-align: center;
  margin-left: auto;
}
.spin { width: 16px; height: 28px; margin-left: 9px; flex: none; }
.drop {
  width: 51px;
  height: 40px;
  margin: 0 2px 0 5px;
  background: #eee;
  display: flex;
  justify-content: center;
  align-items: center;
}
.drop i {
  border-left: 13px solid transparent;
  border-right: 13px solid transparent;
  border-top: 24px solid #000;
}
.picker {
  position: absolute;
  left: -2px;
  top: 66px;
  width: 524px;
  height: 406px;
  background: #fff;
  border: 2px solid #c8c8c8;
  border-radius: 4px;
  padding: 20px 20px 0 20px;
  font: 25px "Roboto", "Liberation Sans", sans-serif;
  z-index: 5;
}
.picker-top { display: flex; align-items: center; height: 48px; padding-left: 10px; }
.month { font-size: 25px; }
.caret {
  margin-left: 13px;
  border-left: 7px solid transparent;
  border-right: 7px solid transparent;
  border-top: 7px solid #111;
}
.pbtns { margin-left: auto; display: flex; gap: 8px; }
.pbtn {
  width: 48px;
  height: 48px;
  border: 2px solid #c4c4c4;
  border-bottom-width: 3px;
  border-radius: 3px;
  background: linear-gradient(180deg, #f3f3f3, #e4e4e4);
  display: flex;
  align-items: center;
  justify-content: center;
}
.tri-l, .tri-r { border-top: 7px solid transparent; border-bottom: 7px solid transparent; }
.tri-l { border-right: 8px solid #777; }
.tri-r { border-left: 8px solid #777; }
.pdot { width: 12px; height: 12px; border-radius: 50%; background: #777; }
.cal {
  margin-top: 19px;
  width: 480px;
  height: 294px;
  border: 2px solid #5f9cef;
}
.cal-head {
  height: 50px;
  padding-top: 2px;
  background: #f6f6f6;
  border-bottom: 2px solid #c8c8c8;
  display: grid;
  grid-template-columns: repeat(7, 1fr);
  align-items: center;
  text-align: center;
}
.cal-body {
  display: grid;
  grid-template-columns: repeat(7, 1fr);
  grid-auto-rows: 40px;
}
.cal-body span { display: flex; align-items: center; justify-content: center; }
.off { color: #c5c5c5; }
.today { background: #c5d4ea; border: 2px solid #b4b4b4; }
.locations { padding-top: 205px; text-align: center; }
.locations h2 {
  margin: 0;
  font-size: 80px;
  line-height: 1;
  font-weight: 900;
  color: #333;
  white-space: nowrap;
  transform: scaleX(1.045);
}
.dock-shade {
  position: absolute;
  left: 0;
  right: 0;
  bottom: 0;
  height: 80px;
  background: linear-gradient(180deg, rgba(0,0,0,0), rgba(0,0,0,.08));
}

/* Dock */
.dock {
  position: absolute;
  left: 148px;
  bottom: 0;
  width: 2264px;
  height: 100px;
  padding-left: 6px;
  display: flex;
  border-radius: 10px 10px 0 0;
  background:
    linear-gradient(180deg, rgba(0,0,0,.05), rgba(255,255,255,.05)),
    linear-gradient(90deg, #55545f 0, #55545f 510px, #b4b2b5 700px, #b4b2b5 1740px, #55545f 1960px, #55545f 100%);
}
.dk {
  width: 81.9px;
  flex: none;
  position: relative;
  padding-top: 9px;
  display: flex;
  justify-content: center;
}
.dk svg { width: 76px; height: 76px; display: block; }
.dot::after {
  content: "";
  position: absolute;
  left: 50%;
  top: 88px;
  width: 8px;
  height: 8px;
  margin-left: -4px;
  border-radius: 50%;
  background: #0a0a0a;
}
.dk-sep { width: 2px; height: 72px; margin: 14px 19px 0 20px; background: #2e2d33; flex: none; }
.dk-badge { font: 700 18px "Roboto", sans-serif; text-anchor: middle; fill: #fff; }
.dk-apr { font: 13px "Roboto", sans-serif; text-anchor: middle; fill: #fff; }
.dk-five { font: 38px "Roboto", sans-serif; text-anchor: middle; fill: #222; }
.dk-s { font: 800 34px "Inter", sans-serif; text-anchor: middle; fill: #4e2f5c; }
.dk-sub { font: 800 42px "Inter", sans-serif; text-anchor: middle; fill: #f08a1f; }
.dk-ps { font: 700 42px "Roboto", sans-serif; text-anchor: middle; fill: #8fc5f2; }
.dk-off { font: 700 30px "Roboto", sans-serif; text-anchor: middle; fill: #f5f0f8; }
.dk-docx { font: 11px "Roboto", sans-serif; text-anchor: middle; fill: #777; }
```
